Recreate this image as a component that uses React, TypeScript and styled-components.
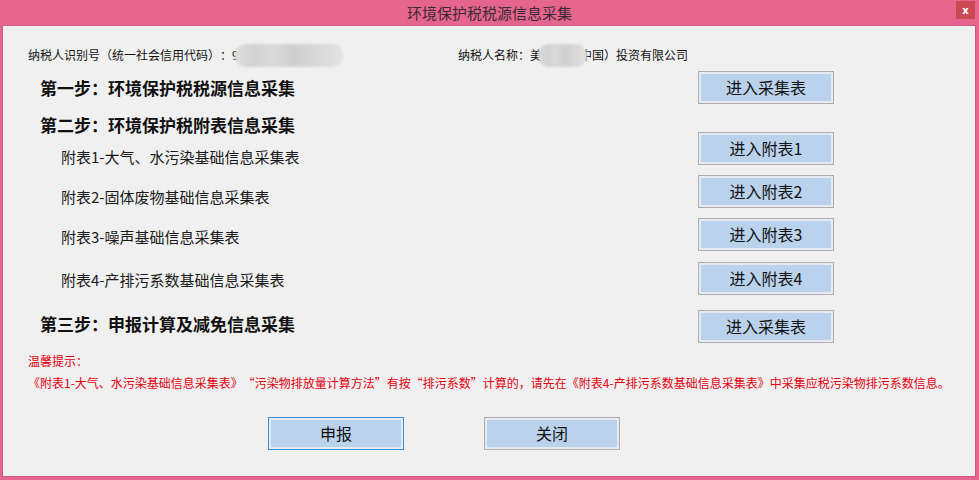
import styled, { createGlobalStyle } from "styled-components";

const GlobalStyle = createGlobalStyle`
  html, body {
    margin: 0;
    padding: 0;
    background: #e6658f;
  }
  body {
    font-family: "Noto Sans CJK SC", "Noto Sans", sans-serif;
    text-spacing-trim: space-all;
  }
`;

/*----------------------------------
	Window frame
----------------------------------*/
const Window = styled.div`
  width: 979px;
  height: 480px;
  background: #e6658f;
  display: flex;
  flex-direction: column;
  overflow: hidden;
`;

const TitleBar = styled.div`
  height: 25px;
  flex: none;
  display: flex;
  align-items: center;
  justify-content: center;
  position: relative;
`;

const Title = styled.div`
  font-size: 15px;
  color: #3b2a31;
  line-height: 25px;
`;

const CloseButton = styled.div`
  position: absolute;
  top: 1px;
  right: 4px;
  width: 19px;
  height: 18px;
  background: #c94a52;
  color: #fff;
  font: bold 10px "DejaVu Sans", sans-serif;
  display: flex;
  align-items: center;
  justify-content: center;
`;

const Content = styled.div`
  flex: 1;
  margin: 0 3px 3px 2px;
  background: #f0f0f0;
  border: 1px solid #cf5a83;
  display: flex;
  flex-direction: column;
`;

/*----------------------------------
	Taxpayer info
----------------------------------*/
const InfoRow = styled.div`
  display: flex;
  padding: 21px 0 0 25px;
  height: 16px;
  font-size: 12px;
  line-height: 16px;
  color: #111;
`;

const InfoItem = styled.div<{ $width?: number }>`
  display: flex;
  align-items: center;
  white-space: nowrap;
  width: ${(p) => (p.$width ? `${p.$width}px` : "auto")};
`;

const Masked = styled.span<{ $width: number }>`
  display: inline-block;
  position: relative;
  z-index: 1;
  width: ${(p) => p.$width}px;
  height: 23px;
  margin: 0 -7px 0 -4px;
  border-radius: 11px;
  background: linear-gradient(
    90deg,
    #dedede 0%,
    #d2d2d2 18%,
    #dadada 35%,
    #cfcfcf 55%,
    #d8d8d8 75%,
    #e2e2e2 100%
  );
  filter: blur(1px);
`;

/*----------------------------------
	Steps
----------------------------------*/
const Steps = styled.div`
  display: flex;
  margin-top: 8px;
  padding-right: 141px;
`;

const LabelColumn = styled.div`
  flex: 1;
  display: flex;
  flex-direction: column;
`;

const ButtonColumn = styled.div`
  width: 136px;
  display: flex;
  flex-direction: column;
`;

const StepTitle = styled.div<{ $top: number }>`
  margin-top: ${(p) => p.$top}px;
  padding-left: 37px;
  font-size: 17px;
  font-weight: bold;
  line-height: 20px;
  color: #111;
  white-space: nowrap;
`;

const SubTitle = styled.div<{ $top: number }>`
  margin-top: ${(p) => p.$top}px;
  padding-left: 58px;
  font-size: 15px;
  line-height: 20px;
  color: #1a1a1a;
  white-space: nowrap;
`;

const ActionButton = styled.button<{ $top?: number; $primary?: boolean }>`
  margin-top: ${(p) => p.$top ?? 0}px;
  width: 136px;
  height: 33px;
  padding: 0;
  box-sizing: border-box;
  border: 1px solid ${(p) => (p.$primary ? "#3c8ed8" : "#adadad")};
  box-shadow: inset 0 0 0 2px #e6ebf1;
  background: #bad2ec;
  font-family: "Noto Sans CJK SC", sans-serif;
  font-size: 16px;
  color: #111;
  line-height: 31px;
  cursor: pointer;
`;

/*----------------------------------
	Tips
----------------------------------*/
const Tips = styled.div`
  margin-top: 10px;
  padding-left: 25px;
  display: flex;
  flex-direction: column;
  gap: 6px;
  font-size: 12px;
  line-height: 16px;
  color: #e2000f;
  white-space: nowrap;
`;

const Footer = styled.div`
  margin-top: 26px;
  padding-left: 265px;
  display: flex;
  gap: 80px;
`;

const App = () => {
  return (
    <>
      <GlobalStyle />
      <Window lang="zh-CN">
        <TitleBar>
          <Title>环境保护税税源信息采集</Title>
          <CloseButton>x</CloseButton>
        </TitleBar>
        <Content>
          <InfoRow>
            <InfoItem $width={430}>
              纳税人识别号（统一社会信用代码）：9
              <Masked $width={108} />
            </InfoItem>
            <InfoItem>
              纳税人名称：美
              <Masked $width={49} />
              中国）投资有限公司
            </InfoItem>
          </InfoRow>
          <Steps>
            <LabelColumn>
              <StepTitle $top={7}>第一步：环境保护税税源信息采集</StepTitle>
              <StepTitle $top={17}>第二步：环境保护税附表信息采集</StepTitle>
              <SubTitle $top={12}>附表1-大气、水污染基础信息采集表</SubTitle>
              <SubTitle $top={20}>附表2-固体废物基础信息采集表</SubTitle>
              <SubTitle $top={20}>附表3-噪声基础信息采集表</SubTitle>
              <SubTitle $top={23}>附表4-产排污系数基础信息采集表</SubTitle>
              <StepTitle $top={24}>第三步：申报计算及减免信息采集</StepTitle>
            </LabelColumn>
            <ButtonColumn>
              <ActionButton>进入采集表</ActionButton>
              <ActionButton $top={28}>进入附表1</ActionButton>
              <ActionButton $top={10}>进入附表2</ActionButton>
              <ActionButton $top={10}>进入附表3</ActionButton>
              <ActionButton $top={11}>进入附表4</ActionButton>
              <ActionButton $top={15}>进入采集表</ActionButton>
            </ButtonColumn>
          </Steps>
          <Tips>
            <div>温馨提示：</div>
            <div>
              《附表1-大气、水污染基础信息采集表》“污染物排放量计算方法”有按“排污系数”计算的，请先在《附表4-产排污系数基础信息采集表》中采集应税污染物排污系数信息。
            </div>
          </Tips>
          <Footer>
            <ActionButton $primary>申报</ActionButton>
            <ActionButton>关闭</ActionButton>
          </Footer>
        </Content>
      </Window>
    </>
  );
};

export default App;
